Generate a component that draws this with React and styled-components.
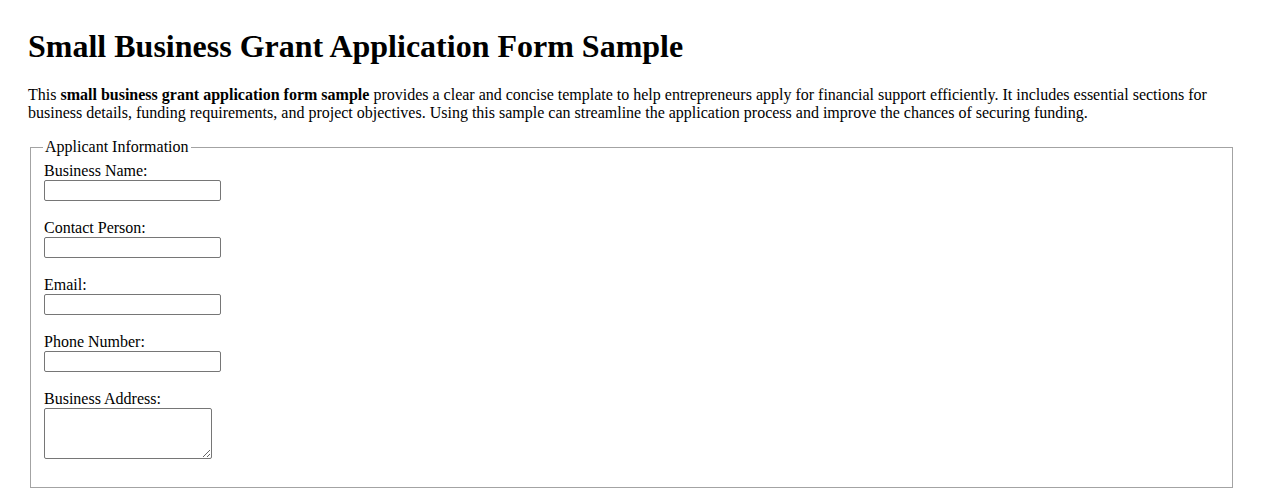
import React from 'react'
import styled, { createGlobalStyle } from 'styled-components'

const GlobalStyle = createGlobalStyle`
  body {
    margin: 8px;
    background: #fff;
    color: #000;
    font-family: "Liberation Serif", "Times New Roman", serif;
    font-size: 16px;
  }
`

const Page = styled.main`
  padding: 20px;
`

const Title = styled.h1`
  margin: 0 0 21px;
  font-size: 32px;
  font-weight: bold;
  line-height: 37px;
`

const Intro = styled.p`
  margin: 0 0 16px;
  line-height: 18px;
`

/* 1px light-grey frame, with one extra pixel of side padding to keep the 2px box */
const Fieldset = styled.fieldset`
  margin: 0 2px;
  padding: 5.6px 13px 11px;
  border: 1px solid #a3a3a3;
  border-radius: 0;
  min-width: 0;
`

const Legend = styled.legend`
  padding: 0 2px;
  margin-left: -1px;
  line-height: 18px;
`

const Field = styled.div`
  display: flex;
  flex-direction: column;
  align-items: flex-start;
  margin-bottom: ${p => (p.$last ? '17px' : '18px')};
`

const Label = styled.label`
  display: block;
  line-height: 18px;
`

const TextInput = styled.input`
  box-sizing: border-box;
  width: 177px;
  height: 21px;
  margin: 0;
  padding: 1px 2px;
  border: 1px solid #767676;
  border-radius: 2px;
  background: #fff;
  font: 13.33px Arial, "Liberation Sans", sans-serif;
`

const TextArea = styled.textarea`
  box-sizing: border-box;
  width: 168px;
  height: 51px;
  margin: 0;
  padding: 2px;
  border: 1px solid #767676;
  border-radius: 2px;
  background: #fff;
  font: 13.33px "Liberation Mono", monospace;
`

const fields = [
  { id: 'business-name', label: 'Business Name:' },
  { id: 'contact-person', label: 'Contact Person:' },
  { id: 'email', label: 'Email:', type: 'email' },
  { id: 'phone', label: 'Phone Number:', type: 'tel' },
]

export default function App() {
  return (
    <>
      <GlobalStyle />
      <Page>
        <Title>Small Business Grant Application Form Sample</Title>
        <Intro>
          This <strong>small business grant application form sample</strong> provides a clear and
          concise template to help entrepreneurs apply for financial support efficiently. It
          includes essential sections for business details, funding requirements, and project
          objectives. Using this sample can streamline the application process and improve the
          chances of securing funding.
        </Intro>
        <form>
          <Fieldset>
            <Legend>Applicant Information</Legend>
            {fields.map(f => (
              <Field key={f.id}>
                <Label htmlFor={f.id}>{f.label}</Label>
                <TextInput id={f.id} type={f.type || 'text'} />
              </Field>
            ))}
            <Field $last>
              <Label htmlFor="address">Business Address:</Label>
              <TextArea id="address" />
            </Field>
          </Fieldset>
        </form>
      </Page>
    </>
  )
}
